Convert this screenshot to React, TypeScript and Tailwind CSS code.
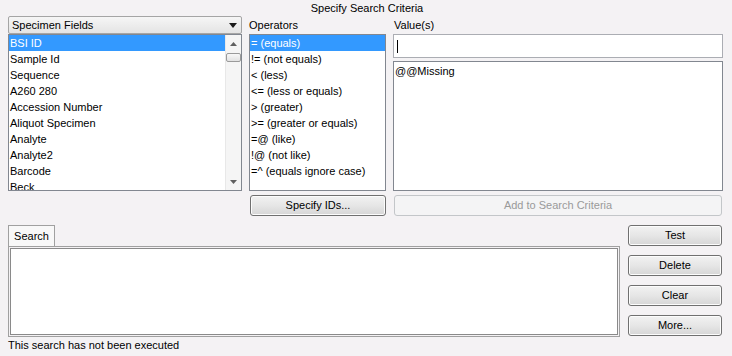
const FIELDS = [
  "BSI ID",
  "Sample Id",
  "Sequence",
  "A260 280",
  "Accession Number",
  "Aliquot Specimen",
  "Analyte",
  "Analyte2",
  "Barcode",
  "Beck",
];

const OPERATORS = [
  "= (equals)",
  "!= (not equals)",
  "< (less)",
  "<= (less or equals)",
  "> (greater)",
  ">= (greater or equals)",
  "=@ (like)",
  "!@ (not like)",
  "=^ (equals ignore case)",
];

function Btn({ label, disabled }: { label: string; disabled?: boolean }) {
  if (disabled) {
    return (
      <div className="h-[21px] rounded-[3px] border border-[#c3c6c9] bg-[#f4f4f5] flex items-center justify-center text-[#9a9a9a]">
        {label}
      </div>
    );
  }
  return (
    <div className="h-[21px] rounded-[3px] border border-[#707070] bg-gradient-to-b from-[#f2f2f2] via-[#e6e6e6] to-[#d6d6d6] flex items-center justify-center text-black shadow-[inset_0_0_0_1px_#fcfcfc]">
      {label}
    </div>
  );
}

function Row({ text, selected }: { text: string; selected?: boolean }) {
  return (
    <div
      className={`h-4 leading-4 pl-[1px] whitespace-nowrap ${
        selected ? "bg-[#3399ff] text-white" : "text-black"
      }`}
    >
      {text}
    </div>
  );
}

export default function App() {
  return (
    <div
      className="w-[732px] h-[356px] bg-[#f4f2f4] text-[11px] text-black overflow-hidden"
      style={{ fontFamily: '"Liberation Sans", Arial, sans-serif' }}
    >
      <div className="h-4 leading-4 text-center pl-[2px]">Specify Search Criteria</div>

      <div className="flex pl-2 gap-[7px]">
        {/* fields */}
        <div className="w-[234px] flex flex-col">
          <div className="h-[18px] border border-[#a5a5a5] rounded-[2px] bg-gradient-to-b from-[#f6f6f6] to-[#e4e4e4] flex items-center pl-[3px] pr-[4px]">
            <span className="flex-1 leading-4">Specimen Fields</span>
            <svg width="8" height="5" viewBox="0 0 8 5">
              <path d="M0 0h8L4 5z" fill="#1a1a1a" />
            </svg>
          </div>
          <div className="h-[157px] border border-[#828790] bg-white flex overflow-hidden">
            <div className="flex-1 overflow-hidden">
              {FIELDS.map((f, i) => (
                <Row key={f} text={f} selected={i === 0} />
              ))}
            </div>
            <div className="w-[16px] bg-[#f5f5f5] border-l border-[#e8e8e8] flex flex-col items-center">
              <div className="h-[17px] flex items-center justify-center">
                <svg width="7" height="4" viewBox="0 0 7 4">
                  <path d="M0 4L3.5 0L7 4z" fill="#606060" />
                </svg>
              </div>
              <div className="w-[15px] h-[9px] mt-[1px] rounded-[2px] border border-[#9a9a9a] bg-gradient-to-b from-[#f8f8f8] to-[#e2e2e2]" />
              <div className="flex-1" />
              <div className="h-[17px] flex items-center justify-center">
                <svg width="7" height="4" viewBox="0 0 7 4">
                  <path d="M0 0L3.5 4L7 0z" fill="#606060" />
                </svg>
              </div>
            </div>
          </div>
        </div>

        {/* operators */}
        <div className="w-[137px] flex flex-col">
          <div className="h-[18px] leading-4 pt-[1px]">Operators</div>
          <div className="h-[157px] border border-[#828790] bg-white overflow-hidden">
            {OPERATORS.map((o, i) => (
              <Row key={o} text={o} selected={i === 0} />
            ))}
          </div>
          <div className="mt-[4px] pl-[1px]">
            <Btn label="Specify IDs..." />
          </div>
        </div>

        {/* values */}
        <div className="w-[330px] flex flex-col">
          <div className="h-[18px] leading-4 pt-[1px] pl-[1px]">Value(s)</div>
          <div className="h-[24px] border border-[#abadb3] bg-white flex items-center pl-[3px]">
            <div className="w-[1px] h-[13px] bg-black" />
          </div>
          <div className="mt-[3px] h-[130px] border border-[#828790] bg-white pl-[1px] pt-[1px] leading-4">
            @@Missing
          </div>
          <div className="mt-[4px] pl-[1px] pr-[1px]">
            <Btn label="Add to Search Criteria" disabled />
          </div>
        </div>
      </div>

      <div className="flex pl-2 pr-[10px] mt-[9px] gap-2">
        <div className="flex-1 flex flex-col">
          <div className="flex">
            <div className="h-[21px] w-[47px] border border-b-0 border-[#a0a0a0] bg-[#f8f8f8] flex items-center justify-center">
              Search
            </div>
          </div>
          <div className="h-[91px] border border-[#a0a0a0] p-[1px] bg-[#f4f2f4]">
            <div className="h-full border border-[#8a8a8a] bg-white" />
          </div>
          <div className="leading-4">This search has not been executed</div>
        </div>
        <div className="w-[94px] flex flex-col gap-[9px]">
          <Btn label="Test" />
          <Btn label="Delete" />
          <Btn label="Clear" />
          <Btn label="More..." />
        </div>
      </div>
    </div>
  );
}
